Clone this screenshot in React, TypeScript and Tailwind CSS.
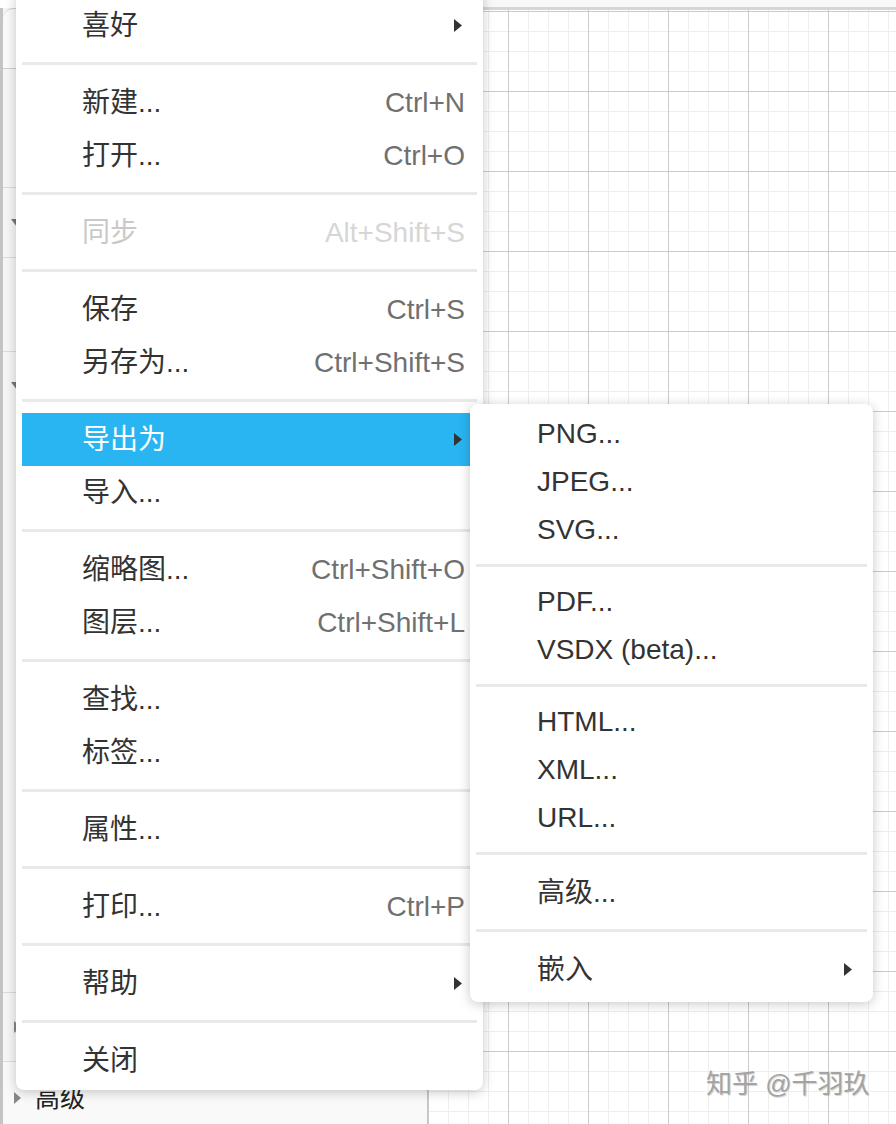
import React from "react";

type Item =
  | { sep: true }
  | {
      sep?: false;
      label: string;
      shortcut?: string;
      arrow?: boolean;
      disabled?: boolean;
      active?: boolean;
      cjk?: boolean;
    };

const FONT = "font-['Liberation_Sans','Noto_Sans_CJK_SC',sans-serif]";

const mainItems: Item[] = [
  { label: "喜好", arrow: true },
  { sep: true },
  { label: "新建...", shortcut: "Ctrl+N" },
  { label: "打开...", shortcut: "Ctrl+O" },
  { sep: true },
  { label: "同步", shortcut: "Alt+Shift+S", disabled: true },
  { sep: true },
  { label: "保存", shortcut: "Ctrl+S" },
  { label: "另存为...", shortcut: "Ctrl+Shift+S" },
  { sep: true },
  { label: "导出为", arrow: true, active: true },
  { label: "导入..." },
  { sep: true },
  { label: "缩略图...", shortcut: "Ctrl+Shift+O" },
  { label: "图层...", shortcut: "Ctrl+Shift+L" },
  { sep: true },
  { label: "查找..." },
  { label: "标签..." },
  { sep: true },
  { label: "属性..." },
  { sep: true },
  { label: "打印...", shortcut: "Ctrl+P" },
  { sep: true },
  { label: "帮助", arrow: true },
  { sep: true },
  { label: "关闭" },
];

const exportItems: Item[] = [
  { label: "PNG..." },
  { label: "JPEG..." },
  { label: "SVG..." },
  { sep: true },
  { label: "PDF..." },
  { label: "VSDX (beta)..." },
  { sep: true },
  { label: "HTML..." },
  { label: "XML..." },
  { label: "URL..." },
  { sep: true },
  { label: "高级...", cjk: true },
  { sep: true },
  { label: "嵌入", arrow: true, cjk: true },
];

const Arrow = () => (
  <svg width="8" height="13" viewBox="0 0 8 13" className="shrink-0">
    <polygon points="0,0 8,6.5 0,13" fill="#333" />
  </svg>
);

const Separator = () => (
  <div className="mx-[6px] mt-[10px] mb-[11px] h-[3px] bg-[#e9e9e9]" />
);

const MainMenu = () => (
  <div className="absolute left-[16px] top-[-7px] w-[467px] rounded-b-[8px] bg-white pt-[6px] pb-[3px] shadow-[0_2px_12px_rgba(0,0,0,0.22)]">
    {mainItems.map((it, i) =>
      it.sep ? (
        <Separator key={i} />
      ) : (
        <div
          key={i}
          className={`mx-[6px] flex h-[53px] items-center pl-[60px] text-[28px] leading-none ${
            it.active ? "bg-[#29b5f1] text-white" : it.disabled ? "text-[#c9c9c9]" : "text-[#333]"
          }`}
        >
          <span className="flex-1">{it.label}</span>
          {it.shortcut && (
            <span className={`pr-[12px] ${it.disabled ? "text-[#d6d6d6]" : "text-[#707070]"}`}>
              {it.shortcut}
            </span>
          )}
          {it.arrow && (
            <span className="pr-[15px]">
              <Arrow />
            </span>
          )}
        </div>
      )
    )}
  </div>
);

const ExportMenu = () => (
  <div className="absolute left-[470px] top-[404px] w-[403px] rounded-[8px] bg-white pt-[6px] pb-[6px] shadow-[0_2px_12px_rgba(0,0,0,0.22)]">
    {exportItems.map((it, i) =>
      it.sep ? (
        <Separator key={i} />
      ) : (
        <div
          key={i}
          className={`mx-[6px] flex items-center pl-[61px] text-[28px] leading-none text-[#333] ${
            it.cjk ? "h-[53px]" : "h-[48px]"
          }`}
        >
          <span className="flex-1">{it.label}</span>
          {it.arrow && (
            <span className="pr-[15px]">
              <Arrow />
            </span>
          )}
        </div>
      )
    )}
  </div>
);

const DownTri = () => (
  <svg width="12" height="8" viewBox="0 0 12 8" className="ml-[8px]">
    <polygon points="0,0 12,0 6,8" fill="#777" />
  </svg>
);

const RightTri = () => (
  <svg width="7" height="12" viewBox="0 0 7 12" className="ml-[11px] shrink-0">
    <polygon points="0,0 7,6 0,12" fill="#888" />
  </svg>
);

const Sidebar = () => (
  <div className="mt-[8px] flex w-[428px] shrink-0 flex-col border-l-[3px] border-r border-[#c4c4c4] bg-[#f6f6f6]">
    <div className="h-[61px] shrink-0 rounded-tl-[10px] border-t border-b border-[#cfcfcf] bg-[#fafafa]" />
    <div className="h-[119px] shrink-0 border-b border-[#dcdcdc]" />
    <div className="flex h-[70px] shrink-0 items-center border-b border-[#dcdcdc]">
      <DownTri />
    </div>
    <div className="h-[94px] shrink-0 border-b border-[#dcdcdc]" />
    <div className="flex h-[641px] shrink-0 items-start border-b border-[#dcdcdc] pt-[30px]">
      <DownTri />
    </div>
    <div className="flex h-[69px] shrink-0 items-center border-b border-[#dcdcdc]">
      <RightTri />
    </div>
    <div className="flex h-[72px] shrink-0 items-center gap-[14px] bg-[#f9f9f9]">
      <RightTri />
      <span className="text-[25px] leading-none text-[#222]">高级</span>
    </div>
  </div>
);

const Canvas = () => (
  <div className="flex flex-1 flex-col bg-[#f8f8f8]">
    <div className="h-[7px]" />
    <div className="h-[3px] bg-[#d6d6d6]" />
    <div className="flex-1 bg-white bg-[linear-gradient(to_right,#cbcbcb_1px,transparent_1px),linear-gradient(to_bottom,#cbcbcb_1px,transparent_1px),linear-gradient(to_right,#eeeeee_1px,transparent_1px),linear-gradient(to_bottom,#eeeeee_1px,transparent_1px)] bg-[size:80px_80px,80px_80px,20px_20px,20px_20px] bg-[position:0_1px,0_1px,0_1px,0_1px]" />
  </div>
);

export default function App() {
  return (
    <div className={`relative flex h-[1124px] w-[896px] overflow-hidden bg-white ${FONT}`}>
      <Sidebar />
      <Canvas />
      <MainMenu />
      <ExportMenu />
      <div className="absolute left-[706px] top-[1071px] text-[26px] leading-none text-[#a3a3a3] [text-shadow:1px_1px_1px_rgba(0,0,0,0.18)]">
        知乎 @千羽玖
      </div>
    </div>
  );
}
